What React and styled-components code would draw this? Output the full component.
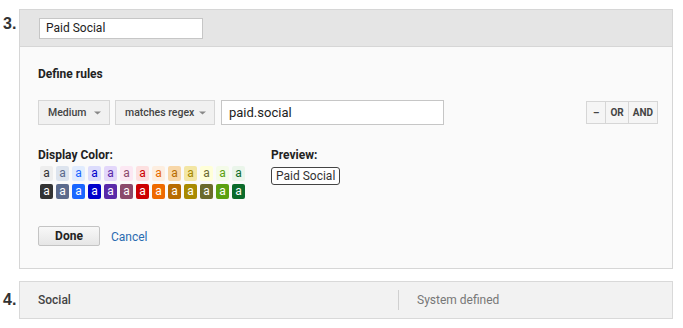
import styled, { createGlobalStyle } from "styled-components";

const GlobalStyle = createGlobalStyle`
  body {
    margin: 0;
    background: #ffffff;
    font-family: Roboto, "Liberation Sans", Arial, sans-serif;
    color: #333;
  }
`;

const Page = styled.div`
  padding: 9px 10px 0 3px;
  display: flex;
  flex-direction: column;
  gap: 12px;
`;

const Segment = styled.div`
  display: grid;
  grid-template-columns: 16px 1fr;
  align-items: start;
`;

const Num = styled.div`
  font-family: "Liberation Sans", Arial, sans-serif;
  font-weight: bold;
  font-size: 16px;
  color: #333;
  line-height: 16px;
  padding-top: ${(p) => p.$top}px;
`;

const Card = styled.div`
  border: 1px solid #d6d6d6;
  background: #fafafa;
`;

const CardHeader = styled.div`
  background: #e5e5e5;
  border-bottom: 1px solid #d6d6d6;
  padding: 8px 19px 7px;
`;

const NameInput = styled.div`
  box-sizing: border-box;
  width: 164px;
  height: 21px;
  background: #fff;
  border: 1px solid #c6c6c6;
  font-size: 12px;
  line-height: 19px;
  padding: 0 6px;
  color: #222;
`;

const CardBody = styled.div`
  padding: 19px 14px 21px 18px;
`;

const Heading = styled.div`
  font-size: 12px;
  font-weight: bold;
  line-height: 16px;
  color: #222;
`;

const RuleRow = styled.div`
  margin-top: 18px;
  display: flex;
  align-items: center;
`;

const Select = styled.div`
  box-sizing: border-box;
  width: ${(p) => p.$w}px;
  height: 25px;
  margin-right: 5px;
  background: #f1f1f1;
  border: 1px solid #d6d6d6;
  display: flex;
  align-items: center;
  justify-content: space-between;
  padding: 0 8px 0 9px;
  font-size: 10.5px;
  font-weight: 500;
  color: #444;
  white-space: nowrap;
`;

const TextInput = styled.div`
  box-sizing: border-box;
  width: 223px;
  height: 25px;
  margin-left: 1px;
  background: #fff;
  border: 1px solid #c6c6c6;
  padding: 0 7px;
  font-size: 13px;
  line-height: 23px;
  color: #222;
`;

const OpGroup = styled.div`
  margin-left: auto;
  display: flex;
  border: 1px solid #d6d6d6;
  background: #f5f5f5;
  height: 21px;
`;

const OpBtn = styled.div`
  padding: 0 ${(p) => p.$pad}px;
  font-size: 10px;
  font-weight: bold;
  color: #444;
  line-height: 21px;
  & + & {
    border-left: 1px solid #d6d6d6;
  }
`;

const ColorGrid = styled.div`
  margin-top: 22px;
  display: grid;
  grid-template-columns: 233px auto;
`;

const Swatches = styled.div`
  margin-top: 3px;
  padding-left: 2px;
  display: grid;
  grid-template-columns: repeat(13, 13px);
  grid-auto-rows: 15px;
  gap: 3px 3px;
`;

const Swatch = styled.div`
  background: ${(p) => p.$bg};
  color: ${(p) => p.$fg};
  border-radius: 2px;
  font-size: 12px;
  line-height: 14px;
  text-align: center;
`;

const Chip = styled.div`
  display: inline-block;
  margin-top: 4px;
  border: 1px solid #444;
  border-radius: 3px;
  padding: 0 4px;
  font-size: 12px;
  line-height: 16px;
  color: #333;
  background: #fff;
`;

const Actions = styled.div`
  margin-top: 26px;
  display: flex;
  align-items: center;
  gap: 11px;
`;

const DoneButton = styled.div`
  box-sizing: border-box;
  width: 62px;
  height: 20px;
  border: 1px solid #c4c4c4;
  border-radius: 2px;
  background: linear-gradient(#f8f8f8, #e6e6e6);
  font-size: 12px;
  font-weight: bold;
  color: #222;
  text-align: center;
  line-height: 18px;
`;

const CancelLink = styled.a`
  font-size: 12px;
  color: #2a6bb0;
  text-decoration: none;
  line-height: 20px;
  margin-top: 2px;
`;

const SystemCard = styled.div`
  box-sizing: border-box;
  height: 38px;
  border: 1px solid #d9d9d9;
  background: #f2f2f2;
  display: grid;
  grid-template-columns: 360px 1fr;
  align-items: center;
  padding-left: 18px;
`;

const SysName = styled.div`
  font-size: 12px;
  font-weight: 500;
  color: #444;
`;

const SysType = styled.div`
  border-left: 1px solid #d0d0d0;
  height: 20px;
  line-height: 20px;
  padding-left: 18px;
  font-size: 12px;
  color: #777;
`;

const Caret = () => (
  <svg width="7" height="4" viewBox="0 0 7 4">
    <path d="M0 0.5 L7 0.5 L3.5 3.5 Z" fill="#888" />
  </svg>
);

const light = [
  ["#eeeeee", "#333333"],
  ["#dde4ee", "#5b6a8c"],
  ["#e1ecfe", "#1a66ff"],
  ["#dcdcfc", "#0000cc"],
  ["#e3d7fa", "#5a2aa8"],
  ["#fce8f3", "#8b4a6b"],
  ["#fde0e0", "#cc0000"],
  ["#fdeee0", "#e66a00"],
  ["#f8d7a8", "#b56b00"],
  ["#f3e6a4", "#a48800"],
  ["#ffffd8", "#6a6a30"],
  ["#f4fbe8", "#5aa010"],
  ["#eaf5ea", "#0b6b2b"],
];

const dark = [
  "#333333",
  "#5b6a8c",
  "#1a66ff",
  "#0000cc",
  "#5a2aa8",
  "#8b4a6b",
  "#cc0000",
  "#ee6a00",
  "#b86b00",
  "#a88a00",
  "#6b6b2b",
  "#5aa010",
  "#0b6b2b",
];

export default function App() {
  return (
    <>
      <GlobalStyle />
      <Page>
        <Segment>
          <Num $top={7}>3.</Num>
          <Card>
            <CardHeader>
              <NameInput>Paid Social</NameInput>
            </CardHeader>
            <CardBody>
              <Heading>Define rules</Heading>
              <RuleRow>
                <Select $w={72}>
                  Medium <Caret />
                </Select>
                <Select $w={100}>
                  matches regex <Caret />
                </Select>
                <TextInput>paid.social</TextInput>
                <OpGroup>
                  <OpBtn $pad={6}>–</OpBtn>
                  <OpBtn $pad={4}>OR</OpBtn>
                  <OpBtn $pad={4}>AND</OpBtn>
                </OpGroup>
              </RuleRow>
              <ColorGrid>
                <div>
                  <Heading>Display Color:</Heading>
                  <Swatches>
                    {light.map(([bg, fg], i) => (
                      <Swatch key={"l" + i} $bg={bg} $fg={fg}>
                        a
                      </Swatch>
                    ))}
                    {dark.map((bg, i) => (
                      <Swatch key={"d" + i} $bg={bg} $fg="#ffffff">
                        a
                      </Swatch>
                    ))}
                  </Swatches>
                </div>
                <div>
                  <Heading>Preview:</Heading>
                  <Chip>Paid Social</Chip>
                </div>
              </ColorGrid>
              <Actions>
                <DoneButton>Done</DoneButton>
                <CancelLink href="#">Cancel</CancelLink>
              </Actions>
            </CardBody>
          </Card>
        </Segment>
        <Segment>
          <Num $top={11}>4.</Num>
          <SystemCard>
            <SysName>Social</SysName>
            <SysType>System defined</SysType>
          </SystemCard>
        </Segment>
      </Page>
    </>
  );
}
